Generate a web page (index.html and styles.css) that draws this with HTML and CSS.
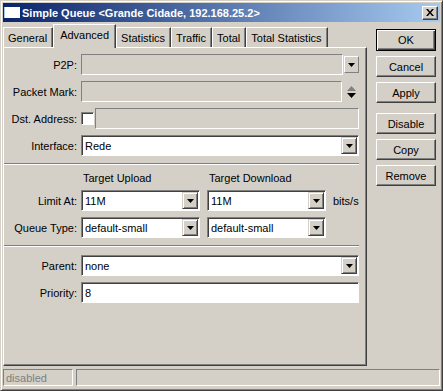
FILE: index.html
```html
<!doctype html>
<html>
<head>
<meta charset="utf-8">
<title>Simple Queue</title>
<link rel="stylesheet" href="styles.css">
</head>
<body>
<div class="window">
	<div class="titlebar">
		<span class="app-icon"></span>
		<span class="title">Simple Queue &lt;Grande Cidade, 192.168.25.2&gt;</span>
		<span class="close-btn"><svg width="8" height="7" viewBox="0 0 8 7"><path d="M0 0h2l2 2.5L6 0h2L5 3.5 8 7H6L4 4.5 2 7H0l3-3.5z" fill="#000"/></svg></span>
	</div>
	<div class="main">
		<div class="left">
			<div class="tabs">
				<span class="tab">General</span>
				<span class="tab active">Advanced</span>
				<span class="tab">Statistics</span>
				<span class="tab">Traffic</span>
				<span class="tab">Total</span>
				<span class="tab">Total Statistics</span>
			</div>
			<div class="panel">
				<div class="form">
					<label>P2P:</label>
					<div class="ctl">
						<div class="field off"></div>
						<span class="arrow-box"><svg width="7" height="4"><polygon points="0,0 7,0 3.5,4" fill="#000"/></svg></span>
					</div>
					<label>Packet Mark:</label>
					<div class="ctl">
						<div class="field off"></div>
						<span class="spin">
							<svg width="9" height="5"><polygon points="0,5 9,5 4.5,0" fill="#808080"/></svg>
							<svg width="9" height="5"><polygon points="0,0 9,0 4.5,5" fill="#000"/></svg>
						</span>
					</div>
					<label>Dst. Address:</label>
					<div class="ctl">
						<span class="check"></span>
						<div class="field off"></div>
					</div>
					<label>Interface:</label>
					<div class="ctl">
						<div class="field">Rede<span class="drop"><svg width="7" height="4"><polygon points="0,0 7,0 3.5,4" fill="#000"/></svg></span></div>
					</div>
				</div>
				<div class="sep"></div>
				<div class="limits">
					<span></span>
					<span class="head">Target Upload</span>
					<span class="head">Target Download</span>
					<span></span>

					<label>Limit At:</label>
					<div class="field">11M<span class="drop"><svg width="7" height="4"><polygon points="0,0 7,0 3.5,4" fill="#000"/></svg></span></div>
					<div class="field">11M<span class="drop"><svg width="7" height="4"><polygon points="0,0 7,0 3.5,4" fill="#000"/></svg></span></div>
					<span class="unit">bits/s</span>

					<label>Queue Type:</label>
					<div class="field">default-small<span class="drop"><svg width="7" height="4"><polygon points="0,0 7,0 3.5,4" fill="#000"/></svg></span></div>
					<div class="field">default-small<span class="drop"><svg width="7" height="4"><polygon points="0,0 7,0 3.5,4" fill="#000"/></svg></span></div>
					<span></span>
				</div>
				<div class="sep sep2"></div>
				<div class="form form2">
					<label>Parent:</label>
					<div class="ctl">
						<div class="field">none<span class="drop"><svg width="7" height="4"><polygon points="0,0 7,0 3.5,4" fill="#000"/></svg></span></div>
					</div>
					<label>Priority:</label>
					<div class="ctl">
						<div class="field">8</div>
					</div>
				</div>
			</div>
		</div>
		<div class="buttons">
			<span class="btn default">OK</span>
			<span class="btn">Cancel</span>
			<span class="btn">Apply</span>
			<span class="btn gap">Disable</span>
			<span class="btn">Copy</span>
			<span class="btn">Remove</span>
		</div>
	</div>
	<div class="statusbar">
		<span class="cell first">disabled</span>
		<span class="cell rest"></span>
	</div>
</div>
</body>
</html>
```
FILE: styles.css
```css
*{margin:0; padding:0;}
body{background:#d4d0c8; font:11px "Liberation Sans", Arial, sans-serif; color:#000;}
.window{width:443px; height:391px; box-sizing:border-box; border:1px solid; border-color:#d4d0c8 #404040 #404040 #d4d0c8; box-shadow:inset 1px 1px #fff, inset -1px -1px #808080; padding:2px; display:flex; flex-direction:column;}

.titlebar{height:19px; display:flex; align-items:center; padding:0 2px 0 1px; background:linear-gradient(to right, #0a246a, #a6caf0); color:#fff;}
.app-icon{width:16px; height:11px; background:#fff; margin-right:2px; box-shadow:inset 1px 0 #a6caf0;}
.title{flex:1; font-weight:bold; font-size:11px; white-space:nowrap;}
.close-btn{width:16px; height:14px; box-sizing:border-box; background:#d4d0c8; border:1px solid; border-color:#fff #404040 #404040 #fff; box-shadow:inset -1px -1px #808080; display:flex; align-items:center; justify-content:center;}

.main{display:flex; flex:none;}
.left{width:364px;}
.tabs{height:25px; display:flex; align-items:flex-end;}
.tab{height:20px; box-sizing:border-box; padding:0 5px 0 4px; display:flex; align-items:center; border:1px solid; border-bottom:none; border-color:#fff #404040 #404040 #fff; box-shadow:inset -1px 0 #808080; white-space:nowrap;}
.tab.active{height:24px; margin-bottom:-1px; padding:0 6px 3px; position:relative; z-index:1; background:#d4d0c8;}
.panel{height:319px; box-sizing:border-box; border:1px solid; border-color:#fff #404040 #404040 #fff; box-shadow:inset -1px -1px #808080; padding:6px 7px 0 0;}

.form{display:grid; grid-template-columns:77px 1fr; grid-auto-rows:21px; row-gap:6px; align-items:center;}
label{text-align:right; padding-right:4px; white-space:nowrap;}
.ctl{display:flex; align-items:center; height:21px;}
.field{flex:1; height:21px; box-sizing:border-box; display:flex; align-items:center; padding-left:3px; background:#fff; border:1px solid; border-color:#808080 #fff #fff #808080; box-shadow:inset 1px 1px #404040; white-space:nowrap;}
.field.off{background:#d4d0c8; box-shadow:none;}
.drop{margin-left:auto; margin-right:1px; width:16px; height:17px; box-sizing:border-box; background:#d4d0c8; border:1px solid; border-color:#d4d0c8 #404040 #404040 #d4d0c8; box-shadow:inset 1px 1px #fff, inset -1px -1px #808080; display:flex; align-items:center; justify-content:center;}
.arrow-box{width:15px; height:17px; margin-left:1px; box-sizing:border-box; border:1px solid; border-color:#fff #808080 #808080 #fff; display:flex; align-items:center; justify-content:center;}
.spin{width:15px; margin-left:2px; display:flex; flex-direction:column; align-items:center; gap:2px;}
.spin svg{display:block;}
.check{width:13px; height:13px; box-sizing:border-box; margin-right:1px; background:#fff; border:1px solid; border-color:#808080 #fff #fff #808080; box-shadow:inset 1px 1px #404040;}

.sep{height:0; border-top:1px solid #808080; border-bottom:1px solid #fff; margin:7px 0 6px;}
.sep2{margin:7px 0 8px;}

.limits{display:grid; grid-template-columns:77px 126px 126px auto; grid-template-rows:13px 21px 21px; row-gap:6px; align-items:center;}
.limits .field{width:119px; flex:none;}
.head{padding-left:2px; white-space:nowrap;}

.buttons{margin-left:9px; width:60px; padding-top:7px; display:flex; flex-direction:column; gap:5px;}
.btn{height:21px; box-sizing:border-box; display:flex; align-items:center; justify-content:center; border:1px solid; border-color:#fff #404040 #404040 #fff; box-shadow:inset -1px -1px #808080;}
.btn.default{height:22px; border-color:#000; box-shadow:inset 1px 1px #fff, inset -1px -1px #404040, inset -2px -2px #808080;}
.btn.gap{margin-top:5px;}

.statusbar{margin-top:3px; height:17px; display:flex; gap:3px;}
.cell{box-sizing:border-box; height:17px; border:1px solid; border-color:#808080 #fff #fff #808080; display:flex; align-items:center; padding-left:2px; color:#808080;}
.cell.first{width:70px;}
.cell.rest{flex:1;}
```
